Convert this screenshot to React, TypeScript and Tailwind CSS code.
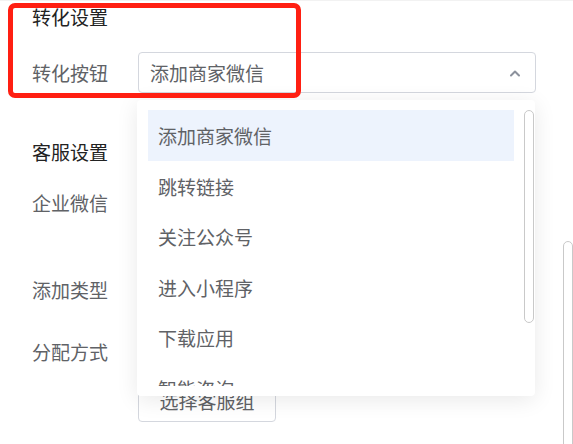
import React from "react";

const opciones = ["添加商家微信", "跳转链接", "关注公众号", "进入小程序", "下载应用", "智能咨询"];

const ChevronUp: React.FC = () => (
  <svg width="12" height="8" viewBox="0 0 12 8" fill="none">
    <path d="M2 6.5L6 2.5L10 6.5" stroke="#8c919c" strokeWidth="2" strokeLinecap="round" strokeLinejoin="round" />
  </svg>
);

const App: React.FC = () => {
  return (
    <div className="relative w-[573px] h-[444px] overflow-hidden bg-white border-t border-[#f2f2f2] font-['Noto_Sans_CJK_SC','Noto_Sans',sans-serif] text-[19px]">
      <div className="flex flex-col pl-8">
        <div className="mt-[3px] h-[26px] leading-[26px] text-[#222]">转化设置</div>

        <div className="mt-[22px] flex items-center">
          <div className="w-[106px] pt-[1px] text-[#606266]">转化按钮</div>
          <div className="relative">
            <div className="flex h-[41px] w-[398px] items-center justify-between rounded border border-[#d4d7de] pl-[11px] pr-[14px] text-[#606266]">
              <span className="pt-[1px]">添加商家微信</span>
              <ChevronUp />
            </div>

            {/* dropdown */}
            <div className="absolute left-[-1px] top-[48px] z-10 flex h-[296px] w-[398px] rounded bg-white py-[10px] pl-[11px] pr-[1px] shadow-[0_4px_22px_rgba(0,0,0,0.09)]">
              <div className="flex-1 overflow-hidden">
                {opciones.map((op, i) => (
                  <div
                    key={op}
                    className={
                      "flex h-[50.6px] items-center pl-[10px] pt-[2px] text-[#606266] " +
                      (i === 0 ? "bg-[#edf3fd]" : "")
                    }
                  >
                    {op}
                  </div>
                ))}
              </div>
              <div className="ml-[10px] w-[10px]">
                <div className="h-[213px] rounded-full border border-[#c9c9c9] bg-white" />
              </div>
            </div>
          </div>
        </div>

        <div className="mt-[46px] h-[26px] leading-[26px] text-[#222]">客服设置</div>
        <div className="mt-[25px] h-[26px] leading-[26px] text-[#606266]">企业微信</div>
        <div className="mt-[61px] h-[26px] leading-[26px] text-[#606266]">添加类型</div>
        <div className="mt-[36px] h-[26px] leading-[26px] text-[#606266]">分配方式</div>
        <div className="ml-[106px] mt-[15px] flex h-[42px] w-[138px] items-center justify-center rounded border border-[#d4d7de] text-[#606266]">
          选择客服组
        </div>
      </div>

      {/* page scrollbar */}
      <div className="absolute right-0 top-[240px] h-[220px] w-[10px] rounded-full border border-[#c9c9c9] bg-white" />

      {/* red highlight */}
      <div className="pointer-events-none absolute left-[8px] top-[2px] z-20 h-[95px] w-[293px] rounded-[7px] border-[5px] border-[#ff1f12]" />
    </div>
  );
};

export default App;
